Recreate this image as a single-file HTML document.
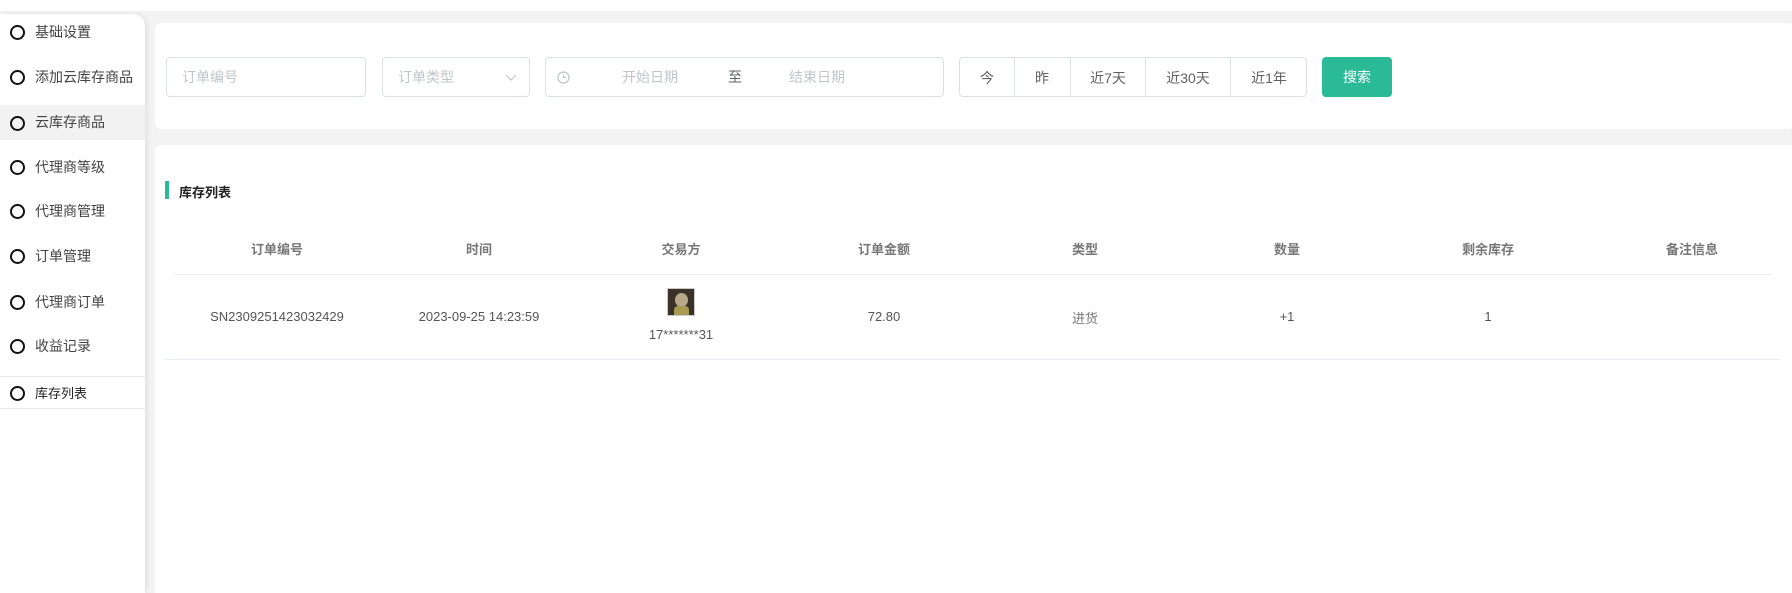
<!DOCTYPE html>
<html><head><meta charset="utf-8"><style>
*{margin:0;padding:0;box-sizing:border-box}
html,body{width:1792px;height:593px;overflow:hidden}
body{background:#fff;font-family:"Liberation Sans","Noto Sans CJK SC",sans-serif;position:relative}
.bg{position:absolute;left:0;top:11px;width:1792px;height:582px;background:#f3f3f3}
.side{position:absolute;left:0;top:14px;width:145px;height:579px;background:#fff;border-top-right-radius:12px;box-shadow:2px 0 6px rgba(0,0,0,.08)}
.mi{position:absolute;left:0;width:145px;height:30px;line-height:30px;font-size:14px;color:#444;padding-left:35px}
.mi:before{content:"";position:absolute;left:10px;top:calc(50% - 7px);width:11px;height:11px;border:2px solid #111;border-radius:50%}
.card{position:absolute;background:#fff;border-radius:6px}
.inp{position:absolute;top:57px;height:40px;border:1px solid #dcdfe6;border-radius:4px;font-size:14px;color:#c0c4cc;line-height:38px}
.t{position:absolute;font-size:14px;color:#606266;transform:translateX(-50%);white-space:nowrap}
.th{position:absolute;top:242px;font-size:13px;font-weight:bold;color:#777;transform:translateX(-50%);white-space:nowrap;line-height:16px}
.td{position:absolute;top:309px;font-size:13px;color:#555;transform:translateX(-50%);white-space:nowrap;line-height:16px}
</style></head><body>
<div class="bg"></div>
<div class="side">
<div class="mi" style="top:3px">基础设置</div>
<div class="mi" style="top:48px">添加云库存商品</div>
<div class="mi" style="top:91px;height:35px;line-height:35px;background:#f2f2f2">云库存商品</div>
<div class="mi" style="top:138px">代理商等级</div>
<div class="mi" style="top:182px">代理商管理</div>
<div class="mi" style="top:227px">订单管理</div>
<div class="mi" style="top:273px">代理商订单</div>
<div class="mi" style="top:317px">收益记录</div>
<div class="mi" style="top:362px;height:33px;line-height:33px;border-top:1px solid #e8e8e8;border-bottom:1px solid #e8e8e8;color:#222;font-size:13px">库存列表</div>
</div>
<div class="card" style="left:155px;top:23px;width:1640px;height:106px"></div>
<div class="card" style="left:155px;top:145px;width:1640px;height:448px;border-radius:6px 6px 0 0"></div>
<div class="inp" style="left:166px;width:200px;padding-left:15px">订单编号</div>
<div class="inp" style="left:382px;width:148px;padding-left:15px">订单类型<svg style="position:absolute;right:12px;top:16px" width="12" height="7" viewBox="0 0 12 7"><path d="M1 1L6 6L11 1" fill="none" stroke="#c0c4cc" stroke-width="1.2"/></svg></div>
<div class="inp" style="left:545px;width:399px">
<svg style="position:absolute;left:11px;top:13px" width="13" height="13" viewBox="0 0 13 13"><circle cx="6.5" cy="6.5" r="5.5" fill="none" stroke="#c0c4cc" stroke-width="1.2"/><path d="M6.5 3.5V6.5H9" fill="none" stroke="#c0c4cc" stroke-width="1.2"/></svg>
<span style="position:absolute;left:76px">开始日期</span><span style="position:absolute;left:182px;color:#606266">至</span><span style="position:absolute;left:243px">结束日期</span></div>
<div class="inp" style="left:959px;width:348px;height:40px"></div>
<div style="position:absolute;left:1014px;top:58px;width:1px;height:38px;background:#dcdfe6"></div>
<div style="position:absolute;left:1070px;top:58px;width:1px;height:38px;background:#dcdfe6"></div>
<div style="position:absolute;left:1145px;top:58px;width:1px;height:38px;background:#dcdfe6"></div>
<div style="position:absolute;left:1230px;top:58px;width:1px;height:38px;background:#dcdfe6"></div>
<div class="t" style="left:987px;top:68px">今</div>
<div class="t" style="left:1042px;top:68px">昨</div>
<div class="t" style="left:1108px;top:68px">近7天</div>
<div class="t" style="left:1188px;top:68px">近30天</div>
<div class="t" style="left:1269px;top:68px">近1年</div>
<div style="position:absolute;left:1322px;top:57px;width:70px;height:40px;background:#2aba98;border-radius:4px;color:#fff;font-size:14px;text-align:center;line-height:40px">搜索</div>
<div style="position:absolute;left:165px;top:181px;width:4px;height:18px;background:#2aba98"></div>
<div style="position:absolute;left:179px;top:182px;font-size:13px;font-weight:bold;color:#222">库存列表</div>
<div class="th" style="left:277px">订单编号</div>
<div class="th" style="left:479px">时间</div>
<div class="th" style="left:681px">交易方</div>
<div class="th" style="left:884px">订单金额</div>
<div class="th" style="left:1085px">类型</div>
<div class="th" style="left:1287px">数量</div>
<div class="th" style="left:1488px">剩余库存</div>
<div class="th" style="left:1692px">备注信息</div>
<div style="position:absolute;left:174px;top:274px;width:1598px;height:1px;background:#ebeef5"></div>
<div class="td" style="left:277px">SN2309251423032429</div>
<div class="td" style="left:479px">2023-09-25 14:23:59</div>
<div style="position:absolute;left:667px;top:288px;width:28px;height:28px;border:1px solid #ccc;background:#3a3128;overflow:hidden"><div style="position:absolute;left:7px;top:4px;width:13px;height:14px;border-radius:50%;background:#b8a88a"></div><div style="position:absolute;left:6px;top:17px;width:15px;height:11px;background:#a89a52;border-radius:4px 4px 0 0"></div></div>
<div class="td" style="left:681px;top:327px">17*******31</div>
<div class="td" style="left:884px">72.80</div>
<div class="td" style="left:1085px;color:#777;top:311px">进货</div>
<div class="td" style="left:1287px">+1</div>
<div class="td" style="left:1488px">1</div>
<div style="position:absolute;left:164px;top:359px;width:1617px;height:1px;background:#ebeef5"></div>
</body></html>
